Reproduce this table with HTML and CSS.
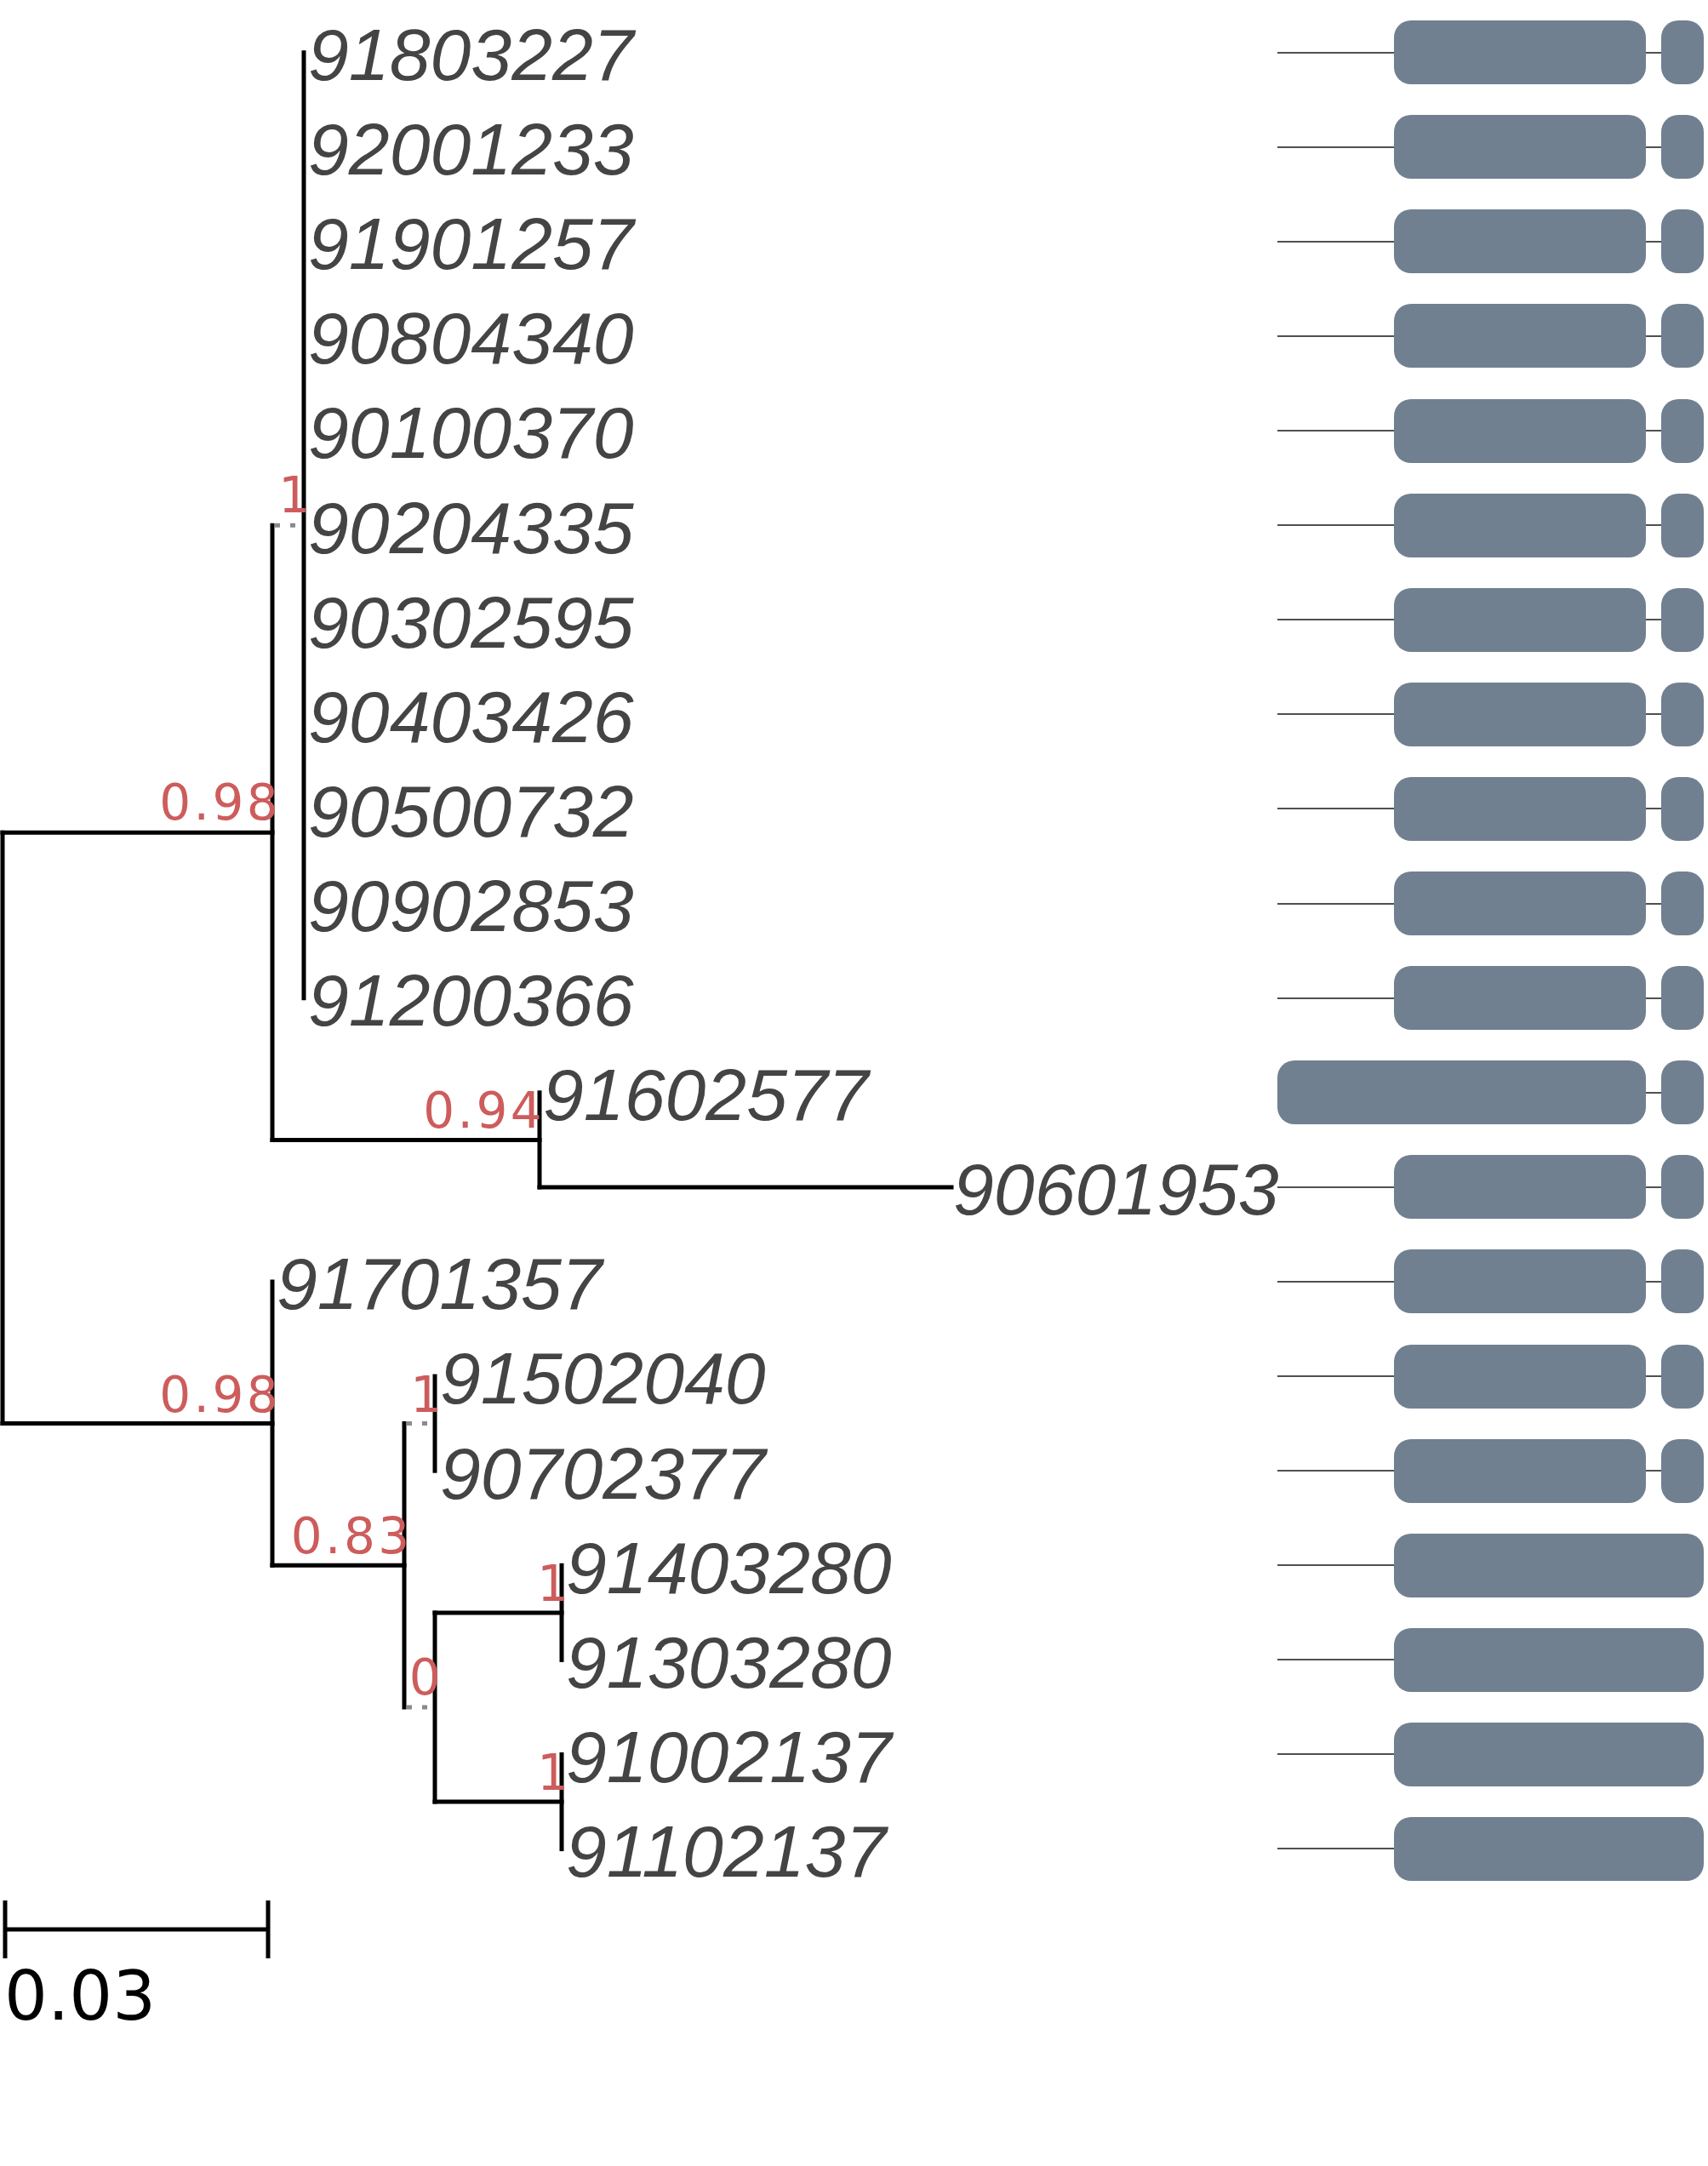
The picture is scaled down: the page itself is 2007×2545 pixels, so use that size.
FILE: index.html
```html
<!DOCTYPE html>
<html>
<head>
<meta charset="utf-8">
<title>Tree with domains</title>
<link rel="stylesheet" href="styles.css">
</head>
<body>
<div class="figure">
  <svg class="tree" width="1501" height="2545" viewBox="0 0 1501 2545">
    <!-- root and main clades -->
    <line class="br" x1="3" y1="978.3" x2="3" y2="1672.6"/>
    <line class="br" x1="3" y1="978.3" x2="320" y2="978.3"/>
    <line class="br" x1="3" y1="1672.6" x2="320" y2="1672.6"/>

    <!-- upper clade -->
    <line class="br" x1="320" y1="617.2" x2="320" y2="1339.4"/>
    <line class="dot" x1="323" y1="617.2" x2="357" y2="617.2"/>
    <line class="br" x1="357" y1="61.7" x2="357" y2="1172.7"/>
    <line class="br" x1="320" y1="1339.4" x2="634" y2="1339.4"/>
    <line class="br" x1="634" y1="1283.8" x2="634" y2="1394.9"/>
    <line class="br" x1="634" y1="1394.9" x2="1118" y2="1394.9"/>

    <!-- lower clade -->
    <line class="br" x1="320" y1="1506.0" x2="320" y2="1839.3"/>
    <line class="br" x1="320" y1="1839.3" x2="475" y2="1839.3"/>
    <line class="br" x1="475" y1="1672.6" x2="475" y2="2006.0"/>
    <line class="dot" x1="478" y1="1672.6" x2="511" y2="1672.6"/>
    <line class="br" x1="511" y1="1617.1" x2="511" y2="1728.2"/>
    <line class="dot" x1="478" y1="2006.0" x2="511" y2="2006.0"/>
    <line class="br" x1="511" y1="1894.9" x2="511" y2="2117.1"/>
    <line class="br" x1="511" y1="1894.9" x2="660" y2="1894.9"/>
    <line class="br" x1="660" y1="1839.3" x2="660" y2="1950.4"/>
    <line class="br" x1="511" y1="2117.1" x2="660" y2="2117.1"/>
    <line class="br" x1="660" y1="2061.5" x2="660" y2="2172.6"/>

    <!-- support values -->
    <text class="support" x="330" y="963">0.98</text>
    <text class="support" x="367.5" y="602">1</text>
    <text class="support" x="640" y="1324.5">0.94</text>
    <text class="support" x="330" y="1659">0.98</text>
    <text class="support" x="484.5" y="1825">0.83</text>
    <text class="support" x="522.5" y="1659">1</text>
    <text class="support" x="521" y="1991">0</text>
    <text class="support" x="671.5" y="1881">1</text>
    <text class="support" x="671.5" y="2103">1</text>

    <!-- leaf names -->
    <text class="leaf" x="362" y="94.0">91803227</text>
    <text class="leaf" x="362" y="205.1">92001233</text>
    <text class="leaf" x="362" y="316.2">91901257</text>
    <text class="leaf" x="362" y="427.3">90804340</text>
    <text class="leaf" x="362" y="538.4">90100370</text>
    <text class="leaf" x="362" y="649.5">90204335</text>
    <text class="leaf" x="362" y="760.6">90302595</text>
    <text class="leaf" x="362" y="871.7">90403426</text>
    <text class="leaf" x="362" y="982.8">90500732</text>
    <text class="leaf" x="362" y="1093.9">90902853</text>
    <text class="leaf" x="362" y="1205.0">91200366</text>
    <text class="leaf" x="638" y="1316.1">91602577</text>
    <text class="leaf" x="1120" y="1427.2">90601953</text>
    <text class="leaf" x="325" y="1538.3">91701357</text>
    <text class="leaf" x="517" y="1649.4">91502040</text>
    <text class="leaf" x="517" y="1760.5">90702377</text>
    <text class="leaf" x="665" y="1871.6">91403280</text>
    <text class="leaf" x="665" y="1982.7">91303280</text>
    <text class="leaf" x="665" y="2093.8">91002137</text>
    <text class="leaf" x="665" y="2204.9">91102137</text>

    <!-- scale bar -->
    <line class="scalebar" x1="6" y1="2267" x2="315" y2="2267"/>
    <line class="scalebar" x1="6" y1="2233" x2="6" y2="2301"/>
    <line class="scalebar" x1="315" y1="2233" x2="315" y2="2301"/>
    <text class="scale-label" x="5" y="2373">0.03</text>
  </svg>

  <div class="motifs">
    <div class="mrow"><span class="ln lead"></span><span class="dom main"></span><span class="ln gap"></span><span class="dom small"></span></div>
    <div class="mrow"><span class="ln lead"></span><span class="dom main"></span><span class="ln gap"></span><span class="dom small"></span></div>
    <div class="mrow"><span class="ln lead"></span><span class="dom main"></span><span class="ln gap"></span><span class="dom small"></span></div>
    <div class="mrow"><span class="ln lead"></span><span class="dom main"></span><span class="ln gap"></span><span class="dom small"></span></div>
    <div class="mrow"><span class="ln lead"></span><span class="dom main"></span><span class="ln gap"></span><span class="dom small"></span></div>
    <div class="mrow"><span class="ln lead"></span><span class="dom main"></span><span class="ln gap"></span><span class="dom small"></span></div>
    <div class="mrow"><span class="ln lead"></span><span class="dom main"></span><span class="ln gap"></span><span class="dom small"></span></div>
    <div class="mrow"><span class="ln lead"></span><span class="dom main"></span><span class="ln gap"></span><span class="dom small"></span></div>
    <div class="mrow"><span class="ln lead"></span><span class="dom main"></span><span class="ln gap"></span><span class="dom small"></span></div>
    <div class="mrow"><span class="ln lead"></span><span class="dom main"></span><span class="ln gap"></span><span class="dom small"></span></div>
    <div class="mrow"><span class="ln lead"></span><span class="dom main"></span><span class="ln gap"></span><span class="dom small"></span></div>
    <div class="mrow"><span class="dom long"></span><span class="ln gap"></span><span class="dom small"></span></div>
    <div class="mrow"><span class="ln lead"></span><span class="dom main"></span><span class="ln gap"></span><span class="dom small"></span></div>
    <div class="mrow"><span class="ln lead"></span><span class="dom main"></span><span class="ln gap"></span><span class="dom small"></span></div>
    <div class="mrow"><span class="ln lead"></span><span class="dom main"></span><span class="ln gap"></span><span class="dom small"></span></div>
    <div class="mrow"><span class="ln lead"></span><span class="dom main"></span><span class="ln gap"></span><span class="dom small"></span></div>
    <div class="mrow"><span class="ln lead"></span><span class="dom full"></span></div>
    <div class="mrow"><span class="ln lead"></span><span class="dom full"></span></div>
    <div class="mrow"><span class="ln lead"></span><span class="dom full"></span></div>
    <div class="mrow"><span class="ln lead"></span><span class="dom full"></span></div>
  </div>
</div>
</body>
</html>
```

FILE: styles.css
```css
html, body {
  margin: 0;
  padding: 0;
  background: #ffffff;
}

.figure {
  display: flex;
  align-items: flex-start;
  width: 2007px;
  height: 2545px;
}

.tree {
  flex: none;
  width: 1501px;
  height: 2545px;
  overflow: visible;
}

.br {
  stroke: #000000;
  stroke-width: 5;
  stroke-linecap: square;
  fill: none;
}

.dot {
  stroke: #8a8a8a;
  stroke-width: 5;
  stroke-dasharray: 6 12;
  fill: none;
}

.scalebar {
  stroke: #000000;
  stroke-width: 5;
  fill: none;
}

.leaf {
  font-family: "Liberation Sans", Arial, sans-serif;
  font-style: italic;
  font-size: 86px;
  fill: #444444;
}

.support {
  font-family: "DejaVu Sans", Verdana, sans-serif;
  font-size: 58px;
  letter-spacing: 3.4px;
  fill: #cd5c5c;
  text-anchor: end;
}

.scale-label {
  font-family: "DejaVu Sans", Verdana, sans-serif;
  font-size: 80px;
  fill: #000000;
}

.motifs {
  flex: none;
  width: 506px;
  display: flex;
  flex-direction: column;
  padding-top: 6.15px;
}

.mrow {
  height: 111.1px;
  display: flex;
  align-items: center;
}

.ln {
  flex: none;
  height: 2px;
  background: #505050;
}

.ln.lead {
  width: 137px;
}

.ln.gap {
  width: 18px;
}

.dom {
  flex: none;
  height: 75px;
  background: #708090;
  border-radius: 20px;
}

.dom.main {
  width: 296px;
}

.dom.long {
  width: 433px;
}

.dom.small {
  width: 50px;
}

.dom.full {
  width: 364px;
}
```
